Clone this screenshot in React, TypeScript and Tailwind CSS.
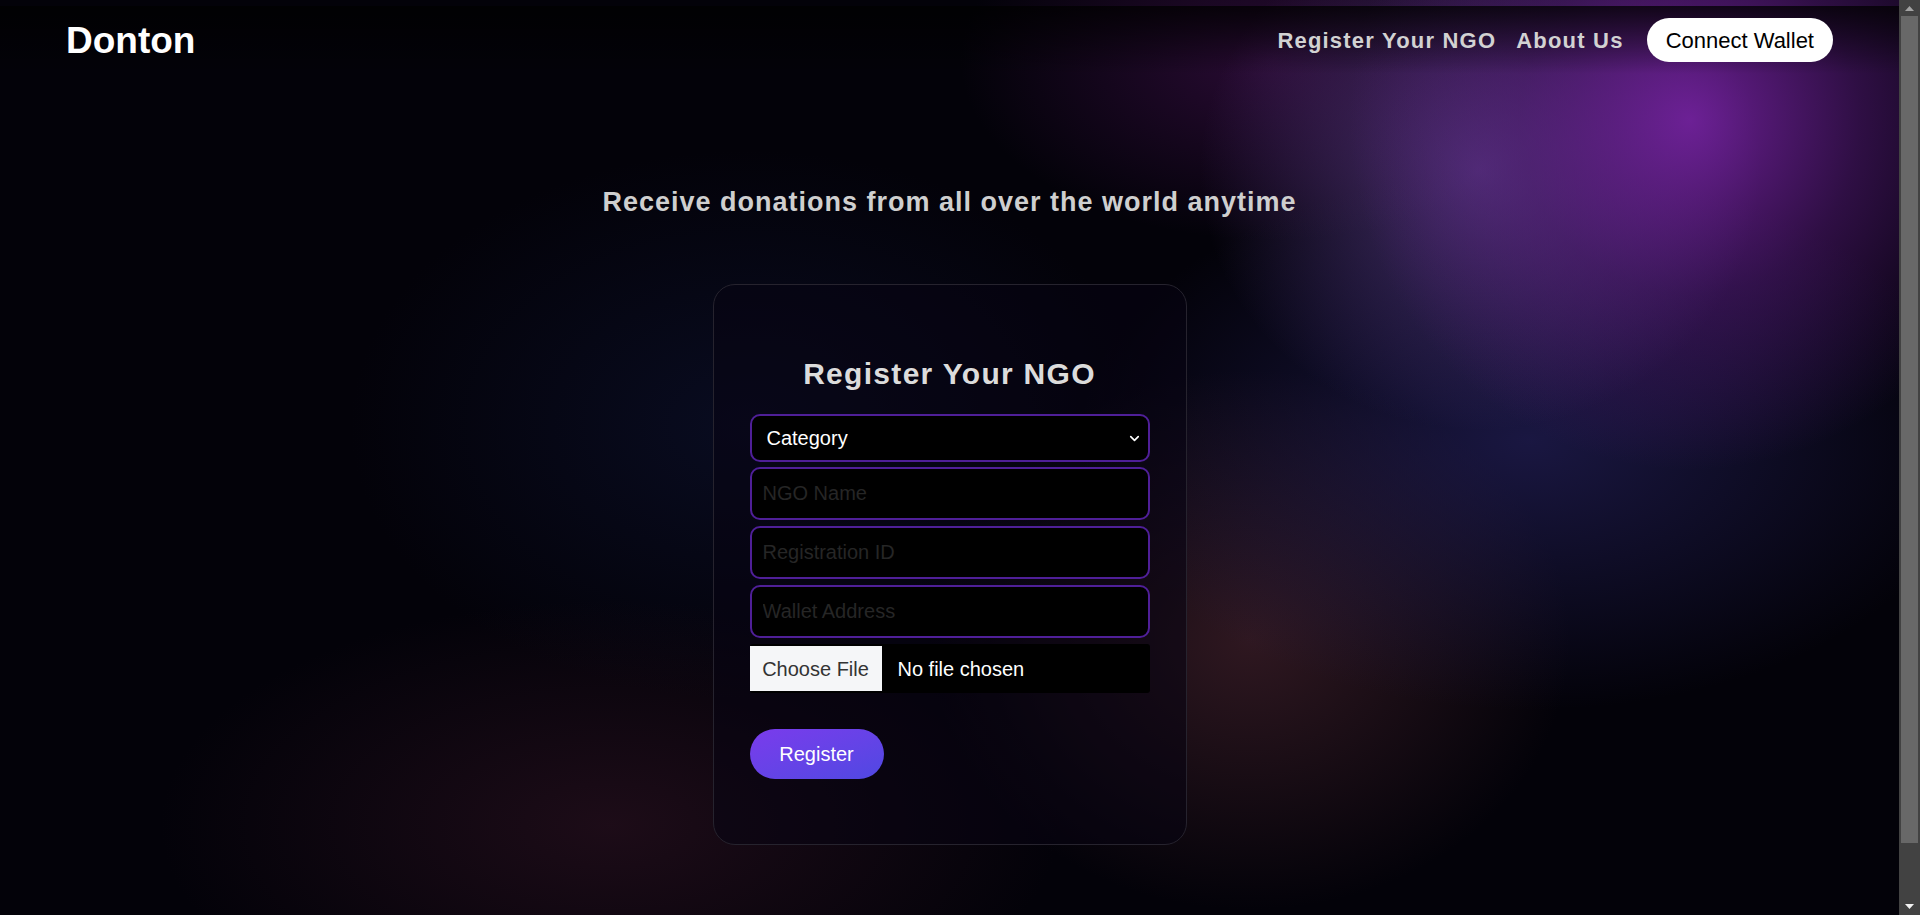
import { ChevronDown } from "lucide-react";

function FakeScrollbar() {
  return (
    <div className="fixed right-0 top-0 z-50 flex h-[915px] w-[21px] flex-col bg-[#424242]">
      <div className="flex h-[16px] items-center justify-center">
        <svg width="9" height="5" viewBox="0 0 9 5">
          <polygon points="0,5 4.5,0 9,5" fill="#a3a3a3" />
        </svg>
      </div>
      <div className="mx-[2px] h-[827px] bg-[#686868]" />
      <div className="flex-1" />
      <div className="flex h-[17px] items-center justify-center">
        <svg width="9" height="5" viewBox="0 0 9 5">
          <polygon points="0,0 9,0 4.5,5" fill="#f2f2f2" />
        </svg>
      </div>
    </div>
  );
}

export default function App() {
  return (
    <div className="relative min-h-[975px] w-full overflow-hidden bg-[#030209] pr-[21px] font-['Liberation_Sans',Arial,sans-serif]">
      {/* decorative background glow */}
      <div className="pointer-events-none absolute inset-0">
        <div className="absolute left-[350px] top-[150px] h-[550px] w-[800px] rounded-full bg-[radial-gradient(closest-side,rgba(14,20,52,0.55),transparent)]" />
        <div className="absolute left-[160px] top-[600px] h-[450px] w-[900px] rounded-full bg-[radial-gradient(closest-side,rgba(50,20,36,0.55),transparent)]" />
        <div className="absolute left-[930px] top-[370px] h-[540px] w-[640px] rounded-full bg-[radial-gradient(closest-side,rgba(76,38,48,0.6),transparent)]" />
        <div className="absolute left-[1080px] top-[170px] h-[540px] w-[900px] rounded-full bg-[radial-gradient(closest-side,rgba(38,34,96,0.65),transparent)]" />
        <div className="absolute left-[960px] top-[-120px] h-[360px] w-[620px] rounded-full bg-[radial-gradient(closest-side,rgba(72,18,86,0.55),transparent)]" />
        <div className="absolute left-[1200px] top-[-90px] h-[520px] w-[560px] rounded-full bg-[radial-gradient(closest-side,rgba(98,66,148,0.7),transparent)]" />
        <div className="absolute left-[1350px] top-[-230px] h-[700px] w-[680px] rounded-full bg-[radial-gradient(closest-side,rgba(124,36,170,0.85),rgba(100,30,140,0.45)_50%,transparent)]" />
      </div>

      <div className="relative">
        <nav className="mt-[6px] flex h-[68px] items-center justify-between bg-gradient-to-b from-black/75 to-transparent px-[66px]">
          <div className="text-[37px] font-bold leading-none text-white">Donton</div>
          <div className="flex items-center">
            <a className="text-[22px] font-bold tracking-[1.2px] text-[#d2d2d2]" href="#">
              Register Your NGO
            </a>
            <a className="ml-[20px] text-[22px] font-bold tracking-[1.2px] text-[#d2d2d2]" href="#">
              About Us
            </a>
            <button className="ml-[23px] flex h-[44px] items-center rounded-full bg-white px-[19px] text-[22px] text-black">
              Connect Wallet
            </button>
          </div>
        </nav>

        <main className="flex flex-col items-center pb-[130px]">
          <h2 className="mt-[112px] text-[27px] font-bold leading-[32px] tracking-[1px] text-[#cfcfcf]">
            Receive donations from all over the world anytime
          </h2>

          <div className="mt-[66px] flex h-[561px] w-[474px] flex-col rounded-[22px] border border-[#26232e] bg-[rgba(8,4,18,0.55)] px-[36px] pt-[71px]">
            <h1 className="text-center text-[30px] font-bold leading-[36px] tracking-[1.3px] text-[#dcdcdc]">
              Register Your NGO
            </h1>

            <div className="relative mt-[22px]">
              <select className="h-[48px] w-full appearance-none rounded-[10px] border-2 border-[#4f1f98] bg-black pl-[15px] text-[20px] text-white outline-none">
                <option>Category</option>
              </select>
              <ChevronDown
                className="pointer-events-none absolute right-[8px] top-[17px] text-white"
                size={15}
                strokeWidth={2.6}
              />
            </div>

            <input
              className="mt-[5px] h-[53px] w-full rounded-[10px] border-2 border-[#4f1f98] bg-black pl-[11px] text-[20px] text-white outline-none placeholder:text-[#262626]"
              placeholder="NGO Name"
            />
            <input
              className="mt-[6px] h-[53px] w-full rounded-[10px] border-2 border-[#4f1f98] bg-black pl-[11px] text-[20px] text-white outline-none placeholder:text-[#262626]"
              placeholder="Registration ID"
            />
            <input
              className="mt-[6px] h-[53px] w-full rounded-[10px] border-2 border-[#4f1f98] bg-black pl-[11px] text-[20px] text-white outline-none placeholder:text-[#262626]"
              placeholder="Wallet Address"
            />

            <label className="mt-[6px] flex h-[49px] w-full cursor-pointer items-center rounded-[3px] bg-black py-[2px]">
              <span className="flex h-full w-[132px] items-center justify-center bg-[#f5f6f8] text-[20px] text-[#333333]">
                Choose File
              </span>
              <span className="ml-[16px] text-[20px] text-white">No file chosen</span>
            </label>

            <div className="mt-[36px]">
              <button className="h-[50px] w-[134px] rounded-full bg-gradient-to-br from-[#7a3bec] to-[#4f48e2] text-[20px] text-white">
                Register
              </button>
            </div>
          </div>
        </main>
      </div>

      <FakeScrollbar />
    </div>
  );
}
